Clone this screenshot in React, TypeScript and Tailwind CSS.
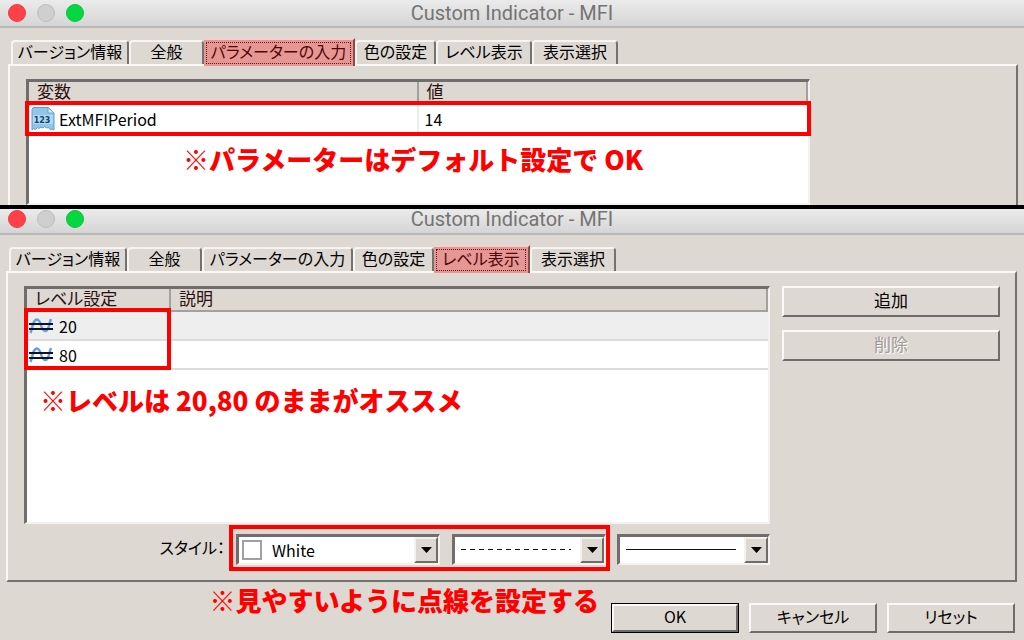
import React, { FC, ReactNode } from "react";

const TABS = [
  { name: "バージョン情報", width: "w-[118px]" },
  { name: "全般", width: "w-[75px]" },
  { name: "パラメーターの入力", width: "w-[151px]" },
  { name: "色の設定", width: "w-[81px]" },
  { name: "レベル表示", width: "w-[96px]" },
  { name: "表示選択", width: "w-[86px]" },
];

const TitleBar: FC<{ className: string }> = ({ className }) => (
  <header
    className={`relative flex items-center justify-center border-b-2 border-[#b9b8b8] bg-linear-to-b from-[#ebebeb] to-[#d5d5d5] ${className}`}
  >
    <div className="absolute left-2 flex gap-[11px]">
      <span className="size-[18px] rounded-full border border-[#ee3a44] bg-[#fd4049]" />
      <span className="size-[18px] rounded-full border border-[#bdbdbd] bg-[#cfcfcf]" />
      <span className="size-[18px] rounded-full border border-[#0cc03c] bg-[#05d741]" />
    </div>
    <h1 className="font-[Roboto,'Liberation_Sans',sans-serif] text-[20px] leading-6 text-[#747474]">
      Custom Indicator - MFI
    </h1>
  </header>
);

const Tabs: FC<{ active: string }> = ({ active }) => (
  <div role="tablist" className="flex h-[26px] items-end pl-[3px]">
    {TABS.map(({ name, width }) =>
      name === active ? (
        <button
          key={name}
          role="tab"
          aria-selected="true"
          className={`${width} relative z-10 -mb-0.5 h-7 shrink-0 border-t-2 border-r-2 border-t-[#f6cfcd] border-r-[#8c4b4b] bg-[#e69793] p-0.5 text-[#4f0508]`}
        >
          <span className="flex h-full items-center justify-center border border-dotted border-[#5c1a1c] pb-1 leading-4 whitespace-nowrap">
            {name}
          </span>
        </button>
      ) : (
        <button
          key={name}
          role="tab"
          aria-selected="false"
          className={`${width} h-6 shrink-0 rounded-t-sm border-t-2 border-r-2 border-l-2 border-t-[#f7f5f2] border-r-[#737271] border-l-[#f7f5f2] pb-1 leading-4 whitespace-nowrap`}
        >
          {name}
        </button>
      )
    )}
  </div>
);

const Panel: FC<{ children: ReactNode; className: string }> = ({ children, className }) => (
  <div
    role="tabpanel"
    className={`flex flex-1 border-2 border-t-[#f9f8f5] border-r-[#737271] border-b-[#737271] border-l-[#f9f8f5] pt-[13px] pl-4 ${className}`}
  >
    {children}
  </div>
);

const List: FC<{ children: ReactNode; className?: string }> = ({ children, className = "" }) => (
  <div
    className={`relative flex-1 border-t-[3px] border-r-2 border-b-2 border-l-[3px] border-t-[#6f6e6d] border-r-[#f4f2ef] border-b-[#f4f2ef] border-l-[#6f6e6d] bg-white ${className}`}
  >
    {children}
  </div>
);

const Th: FC<{ children: ReactNode; className?: string }> = ({ children, className = "" }) => (
  <th
    className={`h-[23px] border-r-2 border-b-2 border-[#a3a19e] bg-[#ddd8d1] p-0 pb-1 pl-2 text-left text-[17px] leading-4 font-normal text-[#2b1010] ${className}`}
  >
    {children}
  </th>
);

const Note: FC<{ children: ReactNode; className?: string }> = ({ children, className = "" }) => (
  <p
    className={`text-[26px] leading-7 font-black whitespace-nowrap text-[#ff0000] [font-feature-settings:normal] ${className}`}
  >
    <span className="font-normal">※</span>
    {children}
  </p>
);

const Button: FC<{ children: ReactNode; className?: string; disabled?: boolean }> = ({
  children,
  className = "",
  disabled,
}) => (
  <button
    disabled={disabled}
    className={`border-2 border-t-[#faf9f7] border-r-[#6d6c6b] border-b-[#6d6c6b] border-l-[#faf9f7] bg-[#ddd8d1] pb-1 leading-5 disabled:text-[#9d9a96] disabled:[text-shadow:1px_1px_#fff] ${className}`}
  >
    {children}
  </button>
);

interface ComboProps {
  label: string;
  options: string[];
  className: string;
  id?: string;
  hideText?: boolean;
  children: ReactNode;
}

const Combo: FC<ComboProps> = ({ label, options, className, id, hideText, children }) => (
  <div
    className={`relative h-[31px] border-t-[3px] border-r-2 border-b-2 border-l-[3px] border-t-[#6f6e6d] border-r-[#f4f2ef] border-b-[#f4f2ef] border-l-[#6f6e6d] bg-white ${className}`}
  >
    <select id={id} aria-label={label} className="block h-full w-full appearance-none pl-[33px] leading-5 outline-none">
      {options.map((option) =>
        hideText ? <option key={option} value={option} aria-label={option} /> : <option key={option}>{option}</option>
      )}
    </select>
    <div className="pointer-events-none absolute inset-0 flex items-center">
      {children}
      <span className="ml-auto flex h-full w-6 items-center justify-center border-2 border-t-[#f4f2ef] border-r-[#6d6c6b] border-b-[#6d6c6b] border-l-[#f4f2ef] bg-[#ddd8d1]">
        <svg width="11" height="6" viewBox="0 0 11 6">
          <path d="M0 0h11L5.500 6z" fill="#000" />
        </svg>
      </span>
    </div>
  </div>
);

const NumberIcon: FC = () => (
  <svg width="24" height="24" viewBox="0 0 24 24" className="shrink-0">
    <path
      d="M3 .5h14.500L23 6v17l-2-1-2 .5-1.500-2-2 .5-2-1.500-1.500 1.500-2-1-2 1.500-1.500-1-2 2-2-1L1 23V2.500Q1 .5 3 .5z"
      fill="#92c6e9"
      stroke="#5c9fcf"
    />
    <path d="M2 8h20v9H2z" fill="#b0d9f3" />
    <path d="M17 .5V6h6z" fill="#d9effb" stroke="#6caad5" />
    <text x="11" y="16" textAnchor="middle" fontSize="8" fontWeight="900" fontFamily="DejaVu Sans, sans-serif" fill="#12446f">
      123
    </text>
  </svg>
);

const LevelIcon: FC = () => (
  <svg width="24" height="16" viewBox="0 0 24 16" className="shrink-0">
    <path
      d="M1.500 15C3.500 10 4 1.500 8 1.500c4.500 0 3.500 11.500 8 11.500 4 0 4-7 6-12"
      fill="none"
      stroke="#6b9dee"
      strokeWidth="2.500"
    />
    <path d="M0 6h24M0 11h24" stroke="#10151c" strokeWidth="2" />
  </svg>
);

const LEVELS = [20, 80];

const App: FC = () => {
  return (
    <div className="flex min-h-screen flex-col bg-[#ddd8d1] font-['Noto_Sans_CJK_JP',sans-serif] text-[16px] text-black [font-feature-settings:'palt']">
      <section className="flex flex-col">
        <TitleBar className="h-7" />
        <div className="flex flex-col pt-2.5 pr-1.5 pl-2">
          <Tabs active="パラメーターの入力" />
          <Panel className="border-b-0 pr-[206px]">
            <List className="h-[126px] border-b-0">
              <table className="w-full table-fixed border-separate border-spacing-0">
                <thead>
                  <tr>
                    <Th>変数</Th>
                    <Th>値</Th>
                  </tr>
                </thead>
                <tbody>
                  <tr>
                    <td className="h-7 border-r-2 border-[#ececec] p-0">
                      <div className="flex items-center gap-1 pl-0.5 leading-6">
                        <NumberIcon />
                        ExtMFIPeriod
                      </div>
                    </td>
                    <td className="p-0 pl-1.5 leading-6">14</td>
                  </tr>
                </tbody>
              </table>
              <div className="pointer-events-none absolute top-[19px] -right-[3px] -left-1 h-[35px] border-4 border-[#ff0000]" />
              <Note className="pt-3 pl-[154px]">パラメーターはデフォルト設定で OK</Note>
            </List>
          </Panel>
        </div>
      </section>

      <section className="flex flex-1 flex-col border-t-4 border-black">
        <TitleBar className="h-[26px] pb-1" />
        <div className="flex flex-1 flex-col pt-2.5 pr-[7px] pl-1.5">
          <Tabs active="レベル表示" />
          <Panel className="gap-3 pr-[15px] pb-[9px]">
            <div className="flex flex-1 flex-col">
              <List>
                <table className="w-full table-fixed border-separate border-spacing-0">
                  <thead>
                    <tr>
                      <Th className="w-[144px]">レベル設定</Th>
                      <Th>説明</Th>
                    </tr>
                  </thead>
                  <tbody>
                    {LEVELS.map((level) => (
                      <tr key={level} className="odd:bg-[#eeeeee]">
                        <td className="h-[29px] border-b-2 border-[#dcdcdc] p-0">
                          <div className="flex items-center gap-1.5 pl-0.5 leading-6">
                            <LevelIcon />
                            {level}
                          </div>
                        </td>
                        <td className="border-b-2 border-[#dcdcdc] p-0" />
                      </tr>
                    ))}
                  </tbody>
                </table>
                <div className="pointer-events-none absolute top-[19px] -left-[3px] h-[62px] w-[147px] border-4 border-[#ff0000]" />
                <Note className="pt-4 pl-[13px]">レベルは 20,80 のままがオススメ</Note>
              </List>
              <div className="flex items-start justify-end pt-px">
                <label htmlFor="level-color" className="mr-1 pt-2.5">
                  スタイル：
                </label>
                <div className="mr-[7px] flex h-[46px] gap-3 border-4 border-[#ff0000] pt-[5px] pl-[3px]">
                  <Combo id="level-color" label="スタイル" options={["White"]} className="w-[204px]">
                    <span className="ml-[3px] size-5 border-2 border-[#a0a0a0] bg-white" />
                  </Combo>
                  <Combo label="線種" options={["破線"]} hideText className="w-[154px]">
                    <svg width="110" height="2" className="ml-1.5">
                      <path d="M0 .5h110" stroke="#111" strokeDasharray="5 4" />
                    </svg>
                  </Combo>
                </div>
                <Combo label="太さ" options={["細線"]} hideText className="mt-[9px] w-[153px]">
                  <svg width="110" height="2" className="ml-1.5">
                    <path d="M0 .5h110" stroke="#111" />
                  </svg>
                </Combo>
              </div>
            </div>
            <div className="flex w-[218px] flex-col gap-[13px]">
              <Button className="h-[31px] text-[17px]">追加</Button>
              <Button className="h-[31px] text-[17px]" disabled>
                削除
              </Button>
            </div>
          </Panel>
        </div>
        <footer className="flex items-start justify-end gap-3 pr-[9px] pb-[7px]">
          <Note className="pt-1">見やすいように点線を設定する</Note>
          <div className="mt-[21px] flex gap-2.5">
            <div className="h-[30px] border border-black">
              <Button className="h-7 w-[126px]">OK</Button>
            </div>
            <Button className="h-[30px] w-32">キャンセル</Button>
            <Button className="h-[30px] w-32">リセット</Button>
          </div>
        </footer>
      </section>
    </div>
  );
};

export default App;
